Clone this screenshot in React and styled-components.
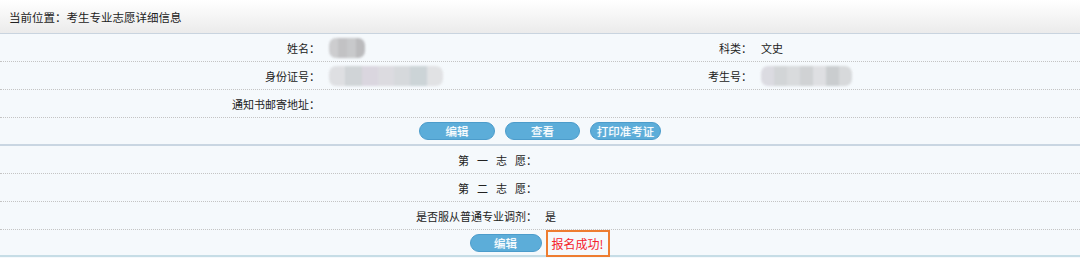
import React from 'react'
import styled, { createGlobalStyle } from 'styled-components'

const GlobalStyle = createGlobalStyle`
    html, body {
        margin: 0;
        padding: 0;
        background: #fff;
    }
    body {
        font-family: "Noto Sans CJK SC", "Noto Sans", sans-serif;
        color: #222;
    }
`

const mosaic = (tones) =>
    `linear-gradient(90deg, ${tones
        .map((c, i) => `${c} ${(i * 100) / tones.length}%, ${c} ${((i + 1) * 100) / tones.length}%`)
        .join(', ')})`

const App = () => {
    return (
        <Page>
            <GlobalStyle />
            <Header>当前位置：考生专业志愿详细信息</Header>

            <InfoTable>
                <Row>
                    <Label>姓名：</Label>
                    <Value><Blur w={36} tones={['#c9c9cb', '#bdbdbf', '#c4c4c6', '#b5b5b7']} /></Value>
                    <Label>科类：</Label>
                    <Value>文史</Value>
                </Row>
                <Row>
                    <Label>身份证号：</Label>
                    <Value><Blur w={114} tones={['#dcdde0', '#ccd0d3', '#d8d3dc', '#dad8de', '#d3d6d9', '#c8d0d4', '#dfe0e2']} /></Value>
                    <Label>考生号：</Label>
                    <Value><Blur w={91} tones={['#d9d8df', '#cfd2d4', '#d6d8da', '#ccced0', '#dcdde0', '#c6c9cb', '#d4d6d8']} /></Value>
                </Row>
                <Row>
                    <Label>通知书邮寄地址：</Label>
                    <Value />
                    <Label />
                    <Value />
                </Row>
                <ActionRow>
                    <Button w={76}>编辑</Button>
                    <Button w={75}>查看</Button>
                    <Button w={71}>打印准考证</Button>
                </ActionRow>
            </InfoTable>

            <WishTable>
                <WishRow>
                    <WishLabel>第&ensp;&nbsp;一&ensp;&nbsp;志&ensp;&nbsp;愿：</WishLabel>
                    <Value />
                </WishRow>
                <WishRow>
                    <WishLabel>第&ensp;&nbsp;二&ensp;&nbsp;志&ensp;&nbsp;愿：</WishLabel>
                    <Value />
                </WishRow>
                <WishRow>
                    <WishLabel>是否服从普通专业调剂：</WishLabel>
                    <Value>是</Value>
                </WishRow>
                <ActionRow last>
                    <Button w={72}>编辑</Button>
                    <Notice>报名成功!</Notice>
                </ActionRow>
            </WishTable>
        </Page>
    )
}

const Blur = ({ w, tones }) => <BlurBox style={{ width: w, background: mosaic(tones) }} />

const Page = styled.div`
    width: 1080px;
    height: 258px;
    background: #f5f9fc;
    overflow: hidden;
`

const Header = styled.div`
    height: 33px;
    display: flex;
    align-items: center;
    padding-left: 9px;
    font-size: 11.5px;
    color: #222;
    background: linear-gradient(#ffffff, #ebebeb);
    border-bottom: 1px solid #c9d4df;
`

const InfoTable = styled.div`
    border-bottom: 2px solid #c9d6e2;
`

const Row = styled.div`
    display: grid;
    grid-template-columns: 30% 20% 20% 30%;
    height: 27px;
    border-bottom: 1px dotted #c4c4c4;
    font-size: 11px;
`

const Label = styled.div`
    display: flex;
    align-items: center;
    justify-content: flex-end;
    padding-right: 4px;
`

const Value = styled.div`
    display: flex;
    align-items: center;
    padding-left: 5px;
`

const BlurBox = styled.div`
    height: 20px;
    border-radius: 7px;
    filter: blur(1px);
    opacity: 0.9;
`

const ActionRow = styled.div`
    display: flex;
    align-items: center;
    justify-content: center;
    gap: ${p => (p.last ? '4px' : '10px')};
    height: ${p => (p.last ? '25px' : '26px')};
`

const Button = styled.button`
    width: ${p => p.w}px;
    height: 18px;
    padding: 0;
    border: 1px solid #4c9ccb;
    border-radius: 9px;
    background: #5cadd9;
    color: #fff;
    font-family: "Noto Sans CJK SC", sans-serif;
    font-size: 11.5px;
    line-height: 16px;
    text-shadow: 0 0 1px rgba(255, 255, 255, 0.6);
`

const Notice = styled.span`
    display: inline-flex;
    align-items: center;
    height: 23px;
    padding: 0 5px 0 4px;
    margin-top: 2px;
    border: 2px solid #ee7d31;
    color: #f5222d;
    font-size: 12px;
`

const WishTable = styled.div`
    border-bottom: 2px solid #c6dde6;
`

const WishRow = styled.div`
    display: grid;
    grid-template-columns: 50% 50%;
    height: 27px;
    border-bottom: 1px dotted #c4c4c4;
    font-size: 11px;
`

const WishLabel = styled(Label)`
    padding-right: 3px;
`

export default App
